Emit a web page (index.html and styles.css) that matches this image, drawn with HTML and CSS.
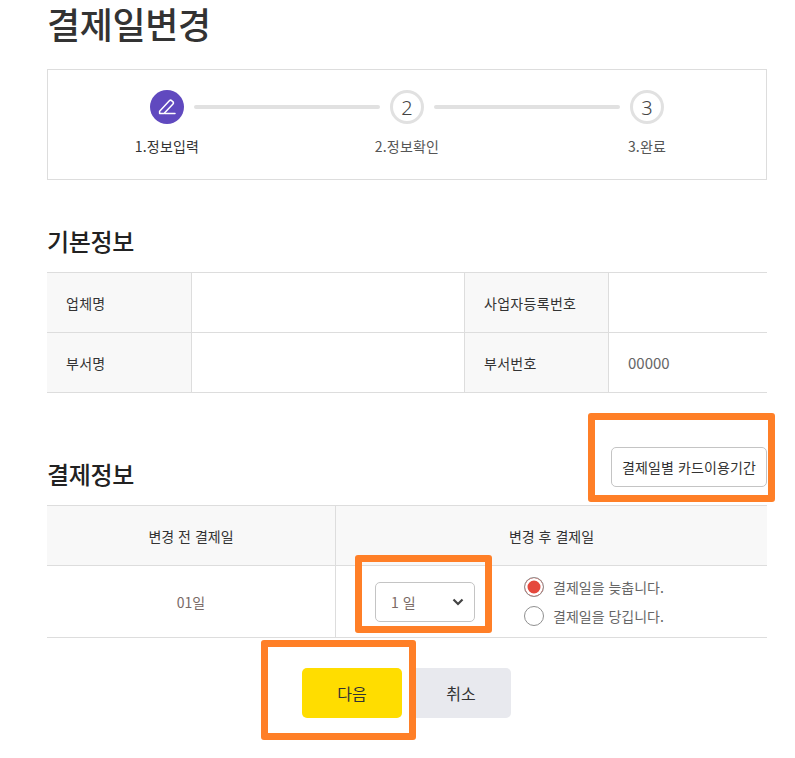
FILE: index.html
```html
<!DOCTYPE html>
<html lang="ko">
<head>
<meta charset="utf-8">
<title>결제일변경</title>
<link rel="stylesheet" href="styles.css">
</head>
<body>
<main class="page">
  <h1 class="title">결제일변경</h1>
  <section class="stepper">
    <div class="step step-active">
      <div class="step-row">
        <span class="circle circle-active">
          <svg width="20" height="20" viewBox="0 0 20 20" fill="none" stroke="#fff" stroke-width="1.5" stroke-linejoin="round" stroke-linecap="round"><path d="M2.6 14.2 12.6 3.6c.6-.6 1.4-.6 2 0l1.4 1.3c.6.6.6 1.4 0 2L7 16.4H2.6z"/><path d="M7.8 16.4H18"/></svg>
        </span>
        <span class="line"></span>
      </div>
      <span class="step-label">1.정보입력</span>
    </div>
    <div class="step">
      <div class="step-row">
        <span class="circle">2</span>
        <span class="line"></span>
      </div>
      <span class="step-label">2.정보확인</span>
    </div>
    <div class="step step-last">
      <div class="step-row">
        <span class="circle">3</span>
      </div>
      <span class="step-label">3.완료</span>
    </div>
  </section>

  <h2 class="heading heading-basic">기본정보</h2>
  <div class="info-grid">
    <div class="cell head">업체명</div>
    <div class="cell cell-divided"></div>
    <div class="cell head">사업자등록번호</div>
    <div class="cell"></div>
    <div class="cell head">부서명</div>
    <div class="cell cell-divided"></div>
    <div class="cell head">부서번호</div>
    <div class="cell value">00000</div>
  </div>

  <div class="pay-header">
    <h2 class="heading">결제정보</h2>
    <button class="period-btn" type="button">결제일별 카드이용기간</button>
  </div>
  <div class="pay-grid">
    <div class="pay-head">변경 전 결제일</div>
    <div class="pay-head">변경 후 결제일</div>
    <div class="pay-cell pay-before">01일</div>
    <div class="pay-cell pay-after">
      <div class="select">
        <span>1 일</span>
        <svg width="12" height="8" viewBox="0 0 12 8" fill="none" stroke="#444" stroke-width="2.2"><path d="M1.5 1.5 6 6l4.5-4.5"/></svg>
      </div>
      <div class="radios">
        <div class="radio-row"><span class="radio radio-on"></span>결제일을 늦춥니다.</div>
        <div class="radio-row"><span class="radio"></span>결제일을 당깁니다.</div>
      </div>
    </div>
  </div>
  <div class="actions">
    <button class="btn btn-next" type="button">다음</button>
    <button class="btn btn-cancel" type="button">취소</button>
  </div>
</main>
<div class="mark mark-period"></div>
<div class="mark mark-select"></div>
<div class="mark mark-next"></div>
</body>
</html>
```
FILE: styles.css
```css
* { box-sizing: border-box; }
html, body { margin: 0; padding: 0; background: #fff; }
body {
  position: relative;
  height: 758px;
  overflow: hidden;
  font-family: "Noto Sans CJK KR", "Noto Sans", sans-serif;
  color: #333;
}
.page { width: 720px; margin-left: 47px; }
.title {
  margin: 0;
  height: 69px;
  font-size: 36px;
  line-height: 46px;
  font-weight: 500;
  letter-spacing: -0.4px;
  color: #333;
}
.stepper {
  display: flex;
  height: 111px;
  padding: 20px 0 0 102px;
  border: 1px solid #ddd;
}
.step { position: relative; width: 240px; }
.step-last { width: 34px; }
.step-row { display: flex; align-items: center; height: 34px; }
.circle {
  flex: none;
  display: flex;
  align-items: center;
  justify-content: center;
  width: 34px;
  height: 34px;
  border: 3px solid #e1e1e1;
  border-radius: 50%;
  font-family: "Noto Sans", sans-serif;
  font-size: 20px;
  font-weight: 300;
  color: #444;
}
.circle-active { background: #6049bf; border: 0; }
.line {
  width: 186px;
  height: 4px;
  margin-left: 10px;
  border-radius: 2px;
  background: #e1e1e1;
}
.step-label {
  position: absolute;
  left: 17px;
  top: 45px;
  transform: translateX(-50%);
  white-space: nowrap;
  font-size: 14px;
  line-height: 22px;
  letter-spacing: 0.2px;
  color: #555;
}
.step-active .step-label { color: #333; }
.heading {
  margin: 0;
  font-size: 24px;
  line-height: 34px;
  font-weight: 500;
  letter-spacing: -0.3px;
  color: #222;
}
.heading-basic { margin-top: 44px; height: 48px; }
.info-grid {
  display: grid;
  grid-template-columns: 145px 273px 144px 158px;
  grid-auto-rows: 60px;
  border-top: 1px solid #ddd;
}
.cell {
  display: flex;
  align-items: center;
  border-bottom: 1px solid #ddd;
  font-size: 14px;
  color: #666;
}
.cell-divided { border-right: 1px solid #ddd; }
.head {
  padding-left: 19px;
  background: #f8f8f8;
  border-right: 1px solid #ddd;
  letter-spacing: 0.3px;
  color: #333;
}
.value { padding-left: 19px; font-size: 15px; }
.pay-header {
  display: flex;
  justify-content: space-between;
  align-items: flex-end;
  height: 112px;
  padding-bottom: 18px;
}
.pay-header .heading { margin-bottom: -4px; }
.period-btn {
  width: 156px;
  height: 40px;
  padding: 0;
  background: #fff;
  border: 1px solid #c4c4c4;
  border-radius: 5px;
  font: 14px "Noto Sans CJK KR", sans-serif;
  letter-spacing: 0.1px;
  color: #333;
}
.pay-grid {
  display: grid;
  grid-template-columns: 289px 431px;
  grid-template-rows: 60px 72px;
  border-top: 1px solid #ddd;
}
.pay-head {
  display: flex;
  align-items: center;
  justify-content: center;
  background: #f8f8f8;
  border-bottom: 1px solid #ddd;
  font-size: 14px;
  color: #333;
}
.pay-head:first-child, .pay-before { border-right: 1px solid #ddd; }
.pay-cell {
  display: flex;
  align-items: center;
  border-bottom: 1px solid #ddd;
  font-size: 14px;
  color: #666;
}
.pay-before { justify-content: center; color: #7a6a66; }
.pay-after { padding-left: 39px; }
.select {
  display: flex;
  align-items: center;
  justify-content: space-between;
  width: 100px;
  height: 40px;
  padding: 0 10px 0 15px;
  border: 1px solid #c4c4c4;
  border-radius: 5px;
  color: #7a6a66;
}
.radios { display: flex; flex-direction: column; gap: 9px; margin: -1px 0 0 49px; }
.radio-row { display: flex; align-items: center; gap: 9px; height: 20px; font-size: 14px; color: #666; }
.radio {
  width: 20px;
  height: 20px;
  border: 1.5px solid #909090;
  border-radius: 50%;
  background: #fff;
}
.radio-on { background: #e5483d; box-shadow: inset 0 0 0 2.5px #fff; }
.actions { display: flex; justify-content: center; gap: 9px; margin-top: 30px; padding-right: 1px; }
.btn {
  width: 100px;
  height: 50px;
  padding: 0;
  border: 0;
  border-radius: 5px;
  font: 16px "Noto Sans CJK KR", sans-serif;
  color: #333;
}
.btn-next { background: #ffdd00; }
.btn-cancel { background: #e8e9ee; }
.mark {
  position: absolute;
  border: 7px solid #ff7f27;
  border-radius: 3px;
  pointer-events: none;
}
.mark-period { left: 588px; top: 413px; width: 187px; height: 89px; }
.mark-select { left: 355px; top: 555px; width: 137px; height: 78px; }
.mark-next { left: 261px; top: 640px; width: 155px; height: 100px; }
```
